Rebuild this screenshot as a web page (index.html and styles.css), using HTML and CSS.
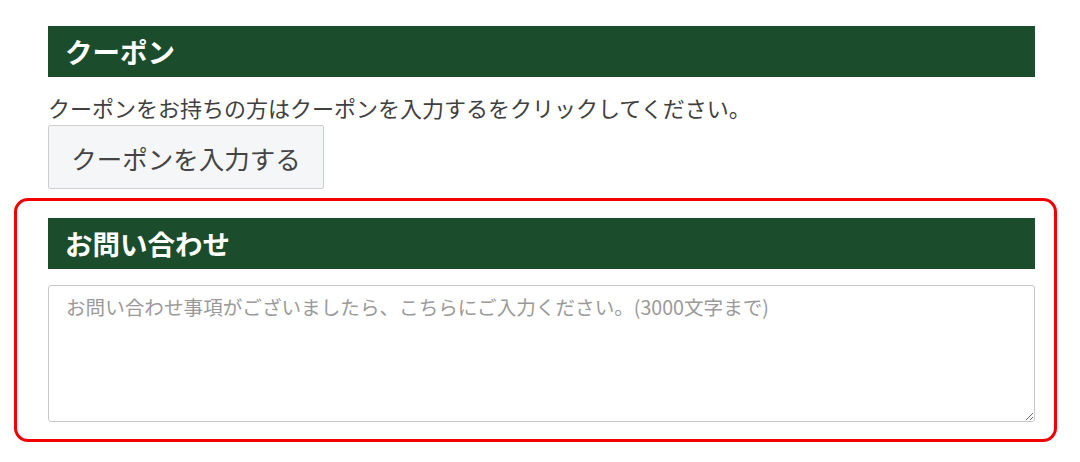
FILE: index.html
```html
<!DOCTYPE html>
<html lang="ja">
<head>
<meta charset="utf-8">
<link rel="stylesheet" href="styles.css">
</head>
<body>
<div class="page">
  <section class="coupon">
    <h2 class="heading">クーポン</h2>
    <p class="note">クーポンをお持ちの方はクーポンを入力するをクリックしてください。</p>
    <button class="btn" type="button">クーポンを入力する</button>
  </section>
  <div class="highlight">
    <section class="inquiry">
      <h2 class="heading">お問い合わせ</h2>
      <textarea class="message" placeholder="お問い合わせ事項がございましたら、こちらにご入力ください。(3000文字まで)"></textarea>
    </section>
  </div>
</div>
</body>
</html>
```

FILE: styles.css
```css
* { box-sizing: border-box; }
html, body { margin: 0; padding: 0; background: #fff; }
body {
  font-family: "Noto Sans CJK JP", "Noto Sans", sans-serif;
  color: #3a3a3a;
}
.page {
  width: 1080px;
  padding: 26px 0 0 48px;
}
.coupon, .inquiry { width: 987px; }
.heading {
  margin: 0;
  height: 51px;
  background: #1b4d2c;
  color: #fff;
  font-size: 27.5px;
  font-weight: 700;
  line-height: 51px;
  padding-left: 17px;
}
.note {
  margin: 15px 0 0;
  font-size: 22px;
  line-height: 30px;
  color: #404040;
}
.btn {
  display: block;
  margin-top: 3px;
  width: 276px;
  height: 64px;
  background: #f5f6f8;
  border: 1px solid #cfcfcf;
  border-radius: 2px;
  font-family: inherit;
  font-size: 25.5px;
  color: #444;
  padding: 0;
}
.highlight {
  margin: 9px 0 0 -34px;
  width: 1043px;
  height: 244px;
  border: 3px solid #f20000;
  border-radius: 14px;
  padding: 17px 19px 0 31px;
}
.message {
  display: block;
  margin-top: 16px;
  width: 987px;
  height: 137px;
  border: 1px solid #c8c8c8;
  border-radius: 3px;
  padding: 8px 17px;
  font-family: inherit;
  font-size: 19.6px;
  line-height: 26px;
  resize: vertical;
}
.message::placeholder { color: #9a9a9a; }
```
